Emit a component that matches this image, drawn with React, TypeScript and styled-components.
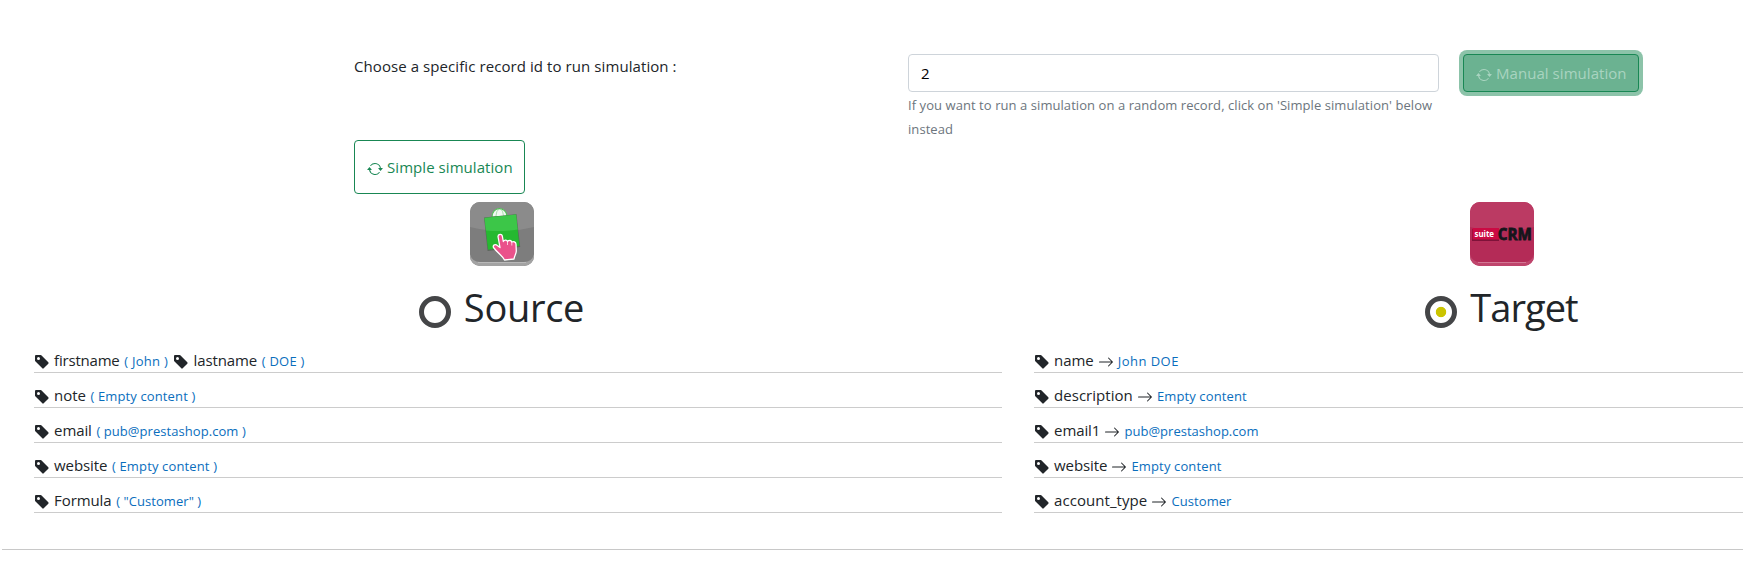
import React from 'react';
import styled, { createGlobalStyle } from 'styled-components';
import { BsArrowRepeat, BsArrowRight, BsTagFill } from 'react-icons/bs';

const GlobalStyle = createGlobalStyle`
  *, *::before, *::after { box-sizing: border-box; }
  body {
    margin: 0;
    background: #fff;
    color: #212529;
    font-family: "Open Sans", "Noto Sans", sans-serif;
    font-size: 15px;
    line-height: 24px;
    overflow: hidden;
  }
`;

const Page = styled.main`
  height: 578px;
  overflow: hidden;
  padding-top: 54px;
`;

const Text = styled.span<{ $track?: number }>`
  letter-spacing: ${({ $track = 0 }) => $track}px;
  white-space: nowrap;
`;

const SimulationForm = styled.form`
  display: grid;
  grid-template-columns: 530px 531px 176px;
  column-gap: 24px;
  align-items: start;
  margin-left: 354px;
  width: max-content;
`;

const Label = styled.label`
  letter-spacing: 0.08px;
`;

const Field = styled.div`
  display: flex;
  flex-direction: column;
  height: 86px;
`;

const Input = styled.input`
  flex: none;
  width: 100%;
  height: 38px;
  padding: 6px 12px;
  border: 1px solid #ced4da;
  border-radius: 4px;
  background: #fff;
  color: #000;
  font: inherit;
  outline: none;
`;

const Help = styled.small`
  flex: none;
  margin-top: 1px;
  color: #6c757d;
  font-size: 13px;
  letter-spacing: 0.065px;
`;

const Button = styled.button<{ $solid?: boolean }>`
  display: flex;
  align-items: center;
  gap: 4px;
  width: ${({ $solid }) => ($solid ? 176 : 171)}px;
  height: ${({ $solid }) => ($solid ? 38 : 54)}px;
  padding: 0 12px;
  border: 1px solid #198754;
  border-radius: 4px;
  background: ${({ $solid }) => ($solid ? '#6bb291' : '#fff')};
  color: ${({ $solid }) => ($solid ? '#a9d4c0' : '#198754')};
  box-shadow: ${({ $solid }) => ($solid ? '0 0 0 4px #8cc3a9' : 'none')};
  font: inherit;

  svg { flex: none; position: relative; top: 2px; }
`;

const SimpleRow = styled.div`
  margin-left: 354px;
`;

const Columns = styled.div`
  display: grid;
  grid-template-columns: 1000px 1000px;
  width: 2000px;
  margin: 8px 0 0 2px;
`;

const Column = styled.section`
  display: flex;
  flex-direction: column;
  align-items: center;
`;

const Logo = styled.svg`
  display: block;
  width: 64px;
  height: 64px;
`;

const Heading = styled.h1<{ $track: number }>`
  display: flex;
  align-items: flex-start;
  gap: 13px;
  height: 48px;
  margin: 17px 0;
  font-size: 38px;
  font-weight: 400;
  line-height: 48px;
  letter-spacing: ${({ $track }) => $track}px;
`;

const Radio = styled.span<{ $checked?: boolean }>`
  width: 32px;
  height: 32px;
  margin: 13px 0 0 -1px;
  border: 5px solid #444547;
  border-radius: 50%;
  background: ${({ $checked }) =>
    $checked ? 'radial-gradient(circle, #cbc400 4.8px, #fff 5.6px)' : '#fff'};
`;

const FieldList = styled.ul`
  display: flex;
  flex-direction: column;
  gap: 10px;
  align-self: stretch;
  margin: 0;
  padding: 0 0 0 32px;
  list-style: none;
`;

const FieldRow = styled.li`
  display: flex;
  align-items: flex-start;
  gap: 5.4px;
  height: 25px;
  border-bottom: 1px solid #ccc;
`;

const FieldEntry = styled.div`
  display: flex;
  align-items: flex-start;
  gap: 4.1px;

  svg { flex: none; margin-top: 6px; }
`;

const Value = styled(Text)<{ $inset?: boolean }>`
  margin-left: ${({ $inset }) => ($inset ? 0.6 : 0)}px;
  color: #0a6ebd;
  font-size: 13px;
  line-height: 26px;
`;

const Divider = styled.hr`
  height: 1px;
  margin: 36px 0 0 2px;
  border: 0;
  background: #c8c8c8;
`;

type Entry = { name: string; track: number; value: string; valueTrack: number };

const sourceRows: Entry[][] = [
  [
    { name: 'firstname', track: -0.2, value: '( John )', valueTrack: 0.26 },
    { name: 'lastname', track: -0.13, value: '( DOE )', valueTrack: 0.26 },
  ],
  [{ name: 'note', track: -0.05, value: '( Empty content )', valueTrack: 0.12 }],
  [{ name: 'email', track: -0.11, value: '( pub@prestashop.com )', valueTrack: 0.06 }],
  [{ name: 'website', track: -0.1, value: '( Empty content )', valueTrack: 0.14 }],
  [{ name: 'Formula', track: -0.11, value: '( "Customer" )', valueTrack: 0.06 }],
];

const targetRows: Entry[] = [
  { name: 'name', track: -0.1, value: 'John DOE', valueTrack: 0.46 },
  { name: 'description', track: 0.02, value: 'Empty content', valueTrack: 0.12 },
  { name: 'email1', track: -0.1, value: 'pub@prestashop.com', valueTrack: 0.02 },
  { name: 'website', track: -0.1, value: 'Empty content', valueTrack: 0.13 },
  { name: 'account_type', track: 0.06, value: 'Customer', valueTrack: 0.06 },
];

function PrestashopLogo() {
  return (
    <Logo viewBox="0 0 64 64" aria-label="PrestaShop">
      <defs>
        <clipPath id="ps-tile"><rect width="64" height="64" rx="10" /></clipPath>
      </defs>
      <g clipPath="url(#ps-tile)">
        <rect width="64" height="64" fill="#7d7d7d" />
        <path d="M0 0H64V25Q32 33 0 25Z" fill="#8b8b8b" />
        <path d="M0 52Q2 60 10 60H54Q62 60 64 52V64H0Z" fill="#a3a3a3" />
        <path d="M8 60.5H56" stroke="#b9b9b9" strokeWidth="1" />
        <path d="M22 15C22 4 36 4 37 14Z" fill="#f1f8f1" stroke="#51bd55" strokeWidth="1.2" />
        <path d="M26 14Q26 9 29 7M33.500 14Q33 9 31 7" fill="none" stroke="#9bd59d" strokeWidth=".8" />
        <path d="M14 15.500L46.500 12L50.200 45L17.600 49Z" fill="#4a5a4b" opacity=".65" />
        <path d="M14.500 16L46 12.500L49.500 44L18 47.800Z" fill="#25b930" />
        <path d="M14.500 16L46 12.500L47.600 27.500Q32 30 16 28.500Z" fill="#3cc648" />
        <path
          d="M28 34.500C28 32 31.800 31.600 32.300 34L33.300 39.500C34.500 37.500 37 38 37.500 39.500C39 37.800 41.500 38.400 41.800 40C43.500 39 45.800 40 46 42L46.300 49C46.300 52 44.500 53 44 57L34.500 58C32.800 54 28.500 52 23.500 45.500C22.500 43 25.500 41.800 27.300 43.500L30 45.500Z"
          fill="#ea528b"
          stroke="#fff"
          strokeWidth="1.300"
          strokeLinejoin="round"
        />
        <path d="M37.500 39.500V43M41.800 40V43.500" stroke="#fff" strokeWidth=".7" />
      </g>
    </Logo>
  );
}

function SuiteCrmLogo() {
  return (
    <Logo viewBox="0 0 64 64" aria-label="SuiteCRM">
      <defs>
        <clipPath id="crm-tile"><rect width="64" height="64" rx="10" /></clipPath>
      </defs>
      <g clipPath="url(#crm-tile)">
        <rect width="64" height="64" fill="#b42b57" />
        <path d="M0 0H64V25Q32 33 0 25Z" fill="#bb3a63" />
        <path d="M0 52Q2 60 10 60H54Q62 60 64 52V64H0Z" fill="#bf456c" />
        <path d="M8 60.500H56" stroke="#d27794" strokeWidth="1" />
        <rect x="2" y="27" width="27" height="12" fill="#7e1239" />
        <rect x="2.500" y="26" width="26.500" height="11.500" fill="#cb0a43" />
        <text x="4.500" y="34.600" fill="#fff" fontFamily="Open Sans, sans-serif" fontSize="8" fontWeight="700" textLength="19.500" lengthAdjust="spacingAndGlyphs">suite</text>
        <text x="27.800" y="37.800" fill="#15151b" stroke="#15151b" strokeWidth=".8" fontFamily="Open Sans, sans-serif" fontSize="15.500" fontWeight="700" textLength="34" lengthAdjust="spacingAndGlyphs">CRM</text>
      </g>
    </Logo>
  );
}

export default function App() {
  return (
    <Page>
      <GlobalStyle />
      <SimulationForm>
        <Label htmlFor="record">Choose a specific record id to run simulation :</Label>
        <Field>
          <Input id="record" defaultValue="2" />
          <Help>
            If you want to run a simulation on a random record, click on 'Simple simulation' below instead
          </Help>
        </Field>
        <Button type="button" $solid>
          <BsArrowRepeat size={16} />
          <Text $track={0.05}>Manual simulation</Text>
        </Button>
      </SimulationForm>
      <SimpleRow>
        <Button type="button">
          <BsArrowRepeat size={16} />
          <Text $track={0.06}>Simple simulation</Text>
        </Button>
      </SimpleRow>
      <Columns>
        <Column>
          <PrestashopLogo />
          <Heading $track={-0.3}>
            <Radio />
            Source
          </Heading>
          <FieldList>
            {sourceRows.map((entries) => (
              <FieldRow key={entries[0].name}>
                {entries.map((e) => (
                  <FieldEntry key={e.name}>
                    <BsTagFill size={16} />
                    <Text $track={e.track}>{e.name}</Text>
                    <Value $inset $track={e.valueTrack}>{e.value}</Value>
                  </FieldEntry>
                ))}
              </FieldRow>
            ))}
          </FieldList>
        </Column>
        <Column>
          <SuiteCrmLogo />
          <Heading $track={-0.95}>
            <Radio $checked />
            Target
          </Heading>
          <FieldList>
            {targetRows.map((e) => (
              <FieldRow key={e.name}>
                <FieldEntry>
                  <BsTagFill size={16} />
                  <Text $track={e.track}>{e.name}</Text>
                  <BsArrowRight size={16} />
                  <Value $track={e.valueTrack}>{e.value}</Value>
                </FieldEntry>
              </FieldRow>
            ))}
          </FieldList>
        </Column>
      </Columns>
      <Divider />
    </Page>
  );
}
